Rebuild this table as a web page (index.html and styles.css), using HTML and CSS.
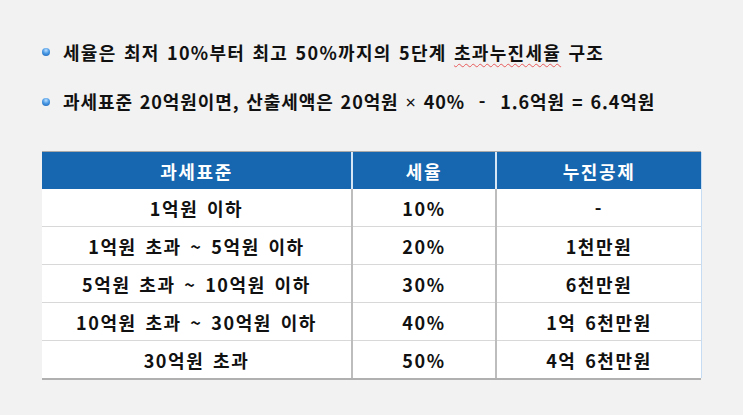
FILE: index.html
```html
<!DOCTYPE html>
<html lang="ko">
<head>
<meta charset="utf-8">
<link rel="stylesheet" href="styles.css">
</head>
<body>
<div class="page">
  <ul class="bullets">
    <li><span class="dot"></span><span>세율은 최저 10%부터 최고 50%까지의 5단계 <span class="spell">초과누진세율</span> 구조</span></li>
    <li class="tight"><span class="dot"></span><span>과세표준 20억원이면, 산출세액은 20억원 <span class="latin">×</span> 40% &nbsp;- &nbsp;1.6억원 = 6.4억원</span></li>
  </ul>
  <table class="tax">
    <colgroup><col class="c1"><col class="c2"><col class="c3"></colgroup>
    <thead>
      <tr><th>과세표준</th><th>세율</th><th>누진공제</th></tr>
    </thead>
    <tbody>
      <tr><td>1억원 이하</td><td>10%</td><td>-</td></tr>
      <tr><td>1억원 초과 ~ 5억원 이하</td><td>20%</td><td>1천만원</td></tr>
      <tr><td>5억원 초과 ~ 10억원 이하</td><td>30%</td><td>6천만원</td></tr>
      <tr><td>10억원 초과 ~ 30억원 이하</td><td>40%</td><td>1억 6천만원</td></tr>
      <tr><td>30억원 초과</td><td>50%</td><td>4억 6천만원</td></tr>
    </tbody>
  </table>
</div>
</body>
</html>
```
FILE: styles.css
```css
html, body {
  margin: 0;
  padding: 0;
  background: #f2f2f2;
}
body {
  width: 743px;
  height: 415px;
  overflow: hidden;
  font-family: "Noto Sans CJK KR", "Noto Sans", sans-serif;
  color: #111;
}
.page {
  padding: 40px 0 0 42px;
}
.bullets {
  list-style: none;
  margin: 0;
  padding: 0;
  display: flex;
  flex-direction: column;
  gap: 25px;
}
.bullets li {
  display: flex;
  align-items: center;
  gap: 13px;
  font-size: 18px;
  font-weight: 700;
  line-height: 24px;
  letter-spacing: 1.3px;
  word-spacing: 1px;
}
.bullets li.tight {
  letter-spacing: 0.9px;
}
.latin {
  font-family: "Noto Sans", sans-serif;
  font-weight: 400;
}
.dot {
  width: 8px;
  height: 8px;
  border-radius: 50%;
  background: radial-gradient(circle at 50% 30%, #bfe0ff 0%, #4a9ae6 45%, #1a5fb0 100%);
  flex: none;
}
.spell {
  text-decoration: underline wavy #e85a5a;
  text-decoration-thickness: 1px;
  text-underline-offset: 3px;
}
.tax {
  margin-top: 38px;
  border-collapse: collapse;
  width: 659px;
  table-layout: fixed;
  font-size: 18px;
  font-weight: 700;
  letter-spacing: 1.6px;
  word-spacing: 2px;
  box-shadow: 0 -1px 0 #a9a9a9, 1px 0 0 #c5dcf2, 0 2px 0 #b0b0b0;
}
.c1 { width: 310px; }
.c2 { width: 144px; }
.c3 { width: 205px; }
.tax th {
  background: #1667b0;
  color: #fff;
  height: 37px;
  padding: 0;
  font-weight: 700;
  border-left: 2px solid #d6e6f5;
}
.tax th:first-child { border-left: none; }
.tax td {
  background: #fff;
  height: 37px;
  padding: 0;
  text-align: center;
  border-top: 1px solid #d8d8d8;
  border-left: 2px solid #bdbdbd;
}
.tax td:first-child { border-left: none; }
.tax tbody tr:first-child td { border-top: none; }
```
